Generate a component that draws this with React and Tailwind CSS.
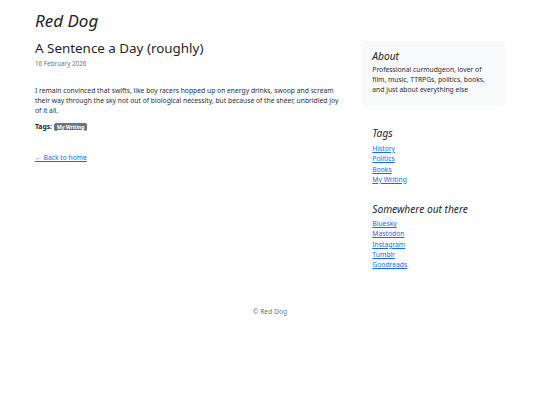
export default function App() {
  const tags = ['History', 'Politics', 'Books', 'My Writing'];
  const links = ['Bluesky', 'Mastodon', 'Instagram', 'Tumblr', 'Goodreads'];

  return (
    <div className="min-h-[405px] bg-white text-[#212529] font-['Noto_Sans',sans-serif]">
      <div className="w-[470px] mx-auto pt-[10px]">
        <header>
          <a className="block italic text-[17px] leading-[22px] text-[#212529]">Red Dog</a>
        </header>

        <div className="flex gap-[22px] mt-[6px]">
          {/* main */}
          <main className="w-[306px]">
            <h1 className="text-[13.4px] leading-[20px] font-normal">A Sentence a Day (roughly)</h1>
            <p className="mt-[1px] text-[6.3px] leading-[10px] text-[#6c757d]">16 February 2026</p>

            <p className="mt-[17px] text-[6.75px] leading-[10px] text-[#2b2f33]">
              I remain convinced that swifts, like boy racers hopped up on energy drinks, swoop and scream
              their way through the sky not out of biological necessity, but because of the sheer, unbridled joy
              of it all.
            </p>

            <div className="mt-[6px] flex items-center gap-[2px] text-[6.75px] leading-[10px]">
              <span className="font-bold">Tags:</span>
              <a className="inline-block bg-[#6c757d] text-white font-bold text-[5px] leading-[8px] px-[3px] rounded-[2px] underline">
                My Writing
              </a>
            </div>

            <a className="block mt-[21px] text-[6.75px] leading-[10px] text-[#0d6efd] underline">
              ← Back to home
            </a>
          </main>

          {/* sidebar */}
          <aside className="w-[143px] mt-[3px]">
            <div className="bg-[#f8f9fa] rounded-[4px] pl-[10px] pr-[14px] pt-[9px] pb-[11px]">
              <h4 className="italic text-[10.2px] leading-[13px]">About</h4>
              <p className="mt-[2px] text-[6.75px] leading-[10px] text-[#2b2f33]">
                Professional curmudgeon, lover of film, music, TTRPGs, politics, books, and just about everything else
              </p>
            </div>

            <div className="px-[10px] mt-[21px]">
              <h4 className="italic text-[10.2px] leading-[13px]">Tags</h4>
              <ul className="mt-[4px]">
                {tags.map((t) => (
                  <li key={t} className="text-[6.75px] leading-[10.3px]">
                    <a className="text-[#0d6efd] underline">{t}</a>
                  </li>
                ))}
              </ul>
            </div>

            <div className="px-[10px] mt-[18px]">
              <h4 className="italic text-[10.2px] leading-[13px]">Somewhere out there</h4>
              <ul className="mt-[3px]">
                {links.map((t) => (
                  <li key={t} className="text-[6.75px] leading-[10.3px]">
                    <a className="text-[#0d6efd] underline">{t}</a>
                  </li>
                ))}
              </ul>
            </div>
          </aside>
        </div>

        <footer className="mt-[36px] text-center text-[6.75px] leading-[10px] text-[#6c757d]">
          © Red Dog
        </footer>
      </div>
    </div>
  );
}
